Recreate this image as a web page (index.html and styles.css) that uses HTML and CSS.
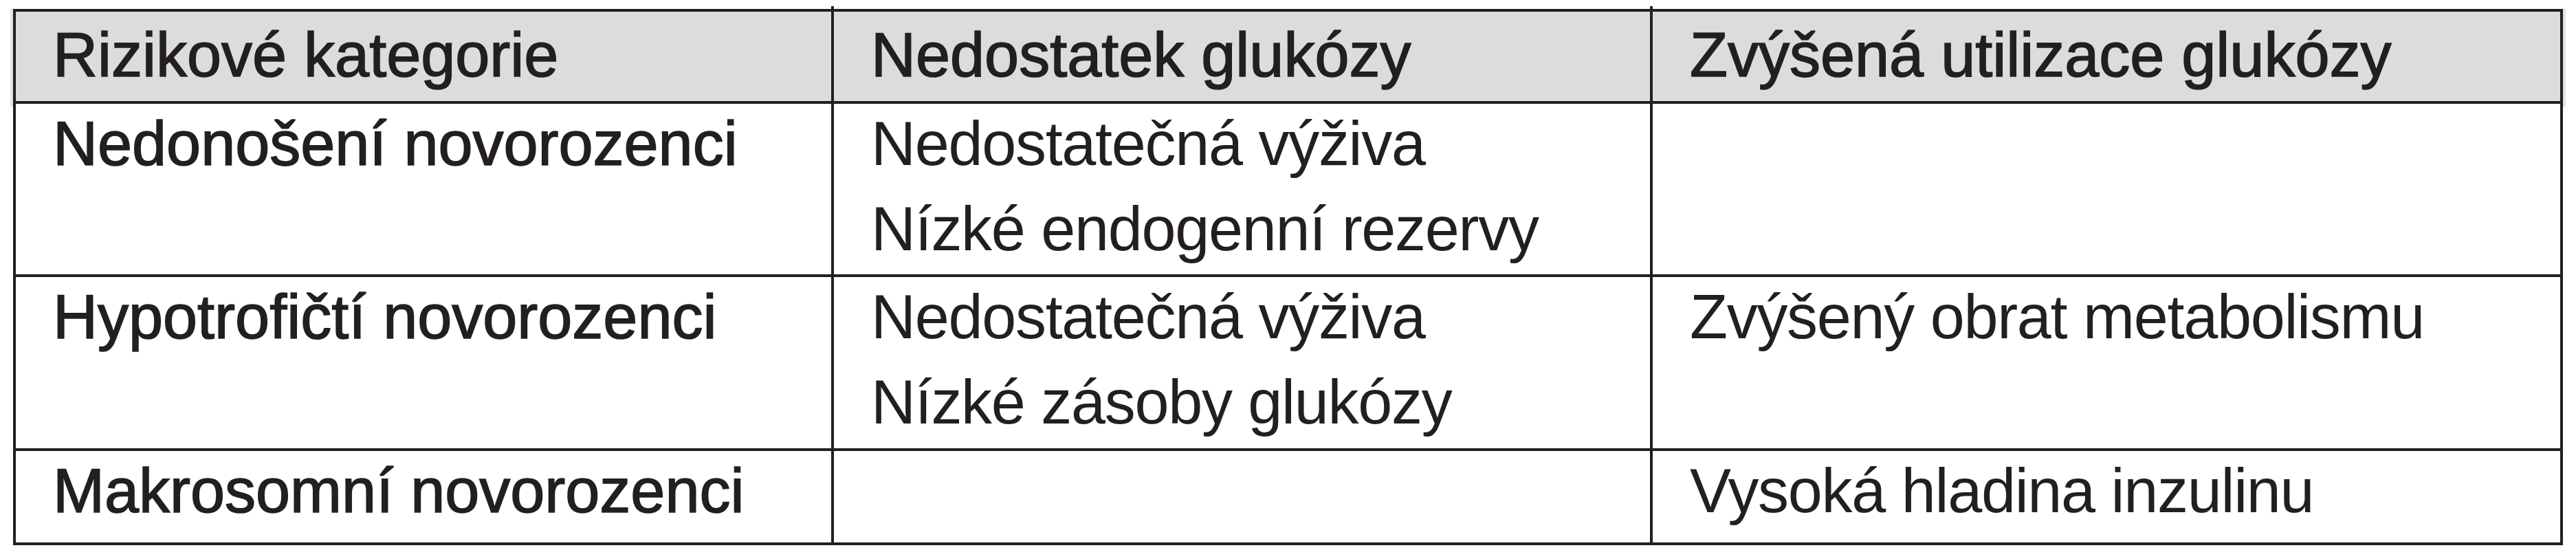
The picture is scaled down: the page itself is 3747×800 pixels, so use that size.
FILE: index.html
```html
<!DOCTYPE html>
<html lang="cs">
<head>
<meta charset="utf-8">
<title>Rizikové kategorie</title>
<link rel="stylesheet" href="styles.css">
</head>
<body>
<div class="page">
  <div class="frame">
    <div class="table">
      <div class="cell head">Rizikové kategorie</div>
      <div class="cell head tick">Nedostatek glukózy</div>
      <div class="cell head tick">Zvýšená utilizace glukózy</div>

      <div class="cell label"><div class="line">Nedonošení novorozenci</div></div>
      <div class="cell body"><div class="line">Nedostatečná výživa</div><div class="line">Nízké endogenní rezervy</div></div>
      <div class="cell body"></div>

      <div class="cell label"><div class="line">Hypotrofičtí novorozenci</div></div>
      <div class="cell body"><div class="line">Nedostatečná výživa</div><div class="line">Nízké zásoby glukózy</div></div>
      <div class="cell body"><div class="line">Zvýšený obrat metabolismu</div></div>

      <div class="cell label"><div class="line">Makrosomní novorozenci</div></div>
      <div class="cell body tail"></div>
      <div class="cell body tail"><div class="line">Vysoká hladina inzulinu</div></div>
    </div>
  </div>
</div>
</body>
</html>
```

FILE: styles.css
```css
html, body {
  margin: 0;
  padding: 0;
  background: #ffffff;
}

body {
  font-family: "Liberation Sans", Arial, sans-serif;
  color: #231f20;
}

.page {
  padding: 13px 0 0 19px;
}

.frame {
  position: relative;
  width: 3709px;
}

/* slightly mis-registered grey fill of the header, as in print */
.frame::before {
  content: "";
  position: absolute;
  left: -4px;
  right: -4px;
  top: 0;
  height: 143px;
  background: #e4e4e5;
  z-index: 0;
}

.table {
  position: relative;
  z-index: 1;
  display: grid;
  grid-template-columns: 1186px 1187px 1320px;
  grid-template-rows: 130px 248px 249px 133px;
  gap: 4px;
  padding: 4px;
  background: #231f20;
}

.cell {
  position: relative;
  background: #ffffff;
  padding: 8px 0 0 54px;
  font-size: 90px;
  display: flex;
  flex-direction: column;
  gap: 24px;
}

.line {
  line-height: 100px;
  white-space: nowrap;
}

.head {
  background: #dcdcde;
  padding-top: 13px;
  line-height: 100px;
  white-space: nowrap;
  -webkit-text-stroke: 1.6px #231f20;
}

.label {
  -webkit-text-stroke: 1.6px #231f20;
}

.body {
  letter-spacing: -1.3px;
}

/* column rules stick out slightly above and below the frame */
.tick::before {
  content: "";
  position: absolute;
  left: -4px;
  top: -8px;
  width: 4px;
  height: 4px;
  background: #231f20;
}

.tail::after {
  content: "";
  position: absolute;
  left: -4px;
  bottom: -12px;
  width: 4px;
  height: 8px;
  background: #231f20;
}
```
